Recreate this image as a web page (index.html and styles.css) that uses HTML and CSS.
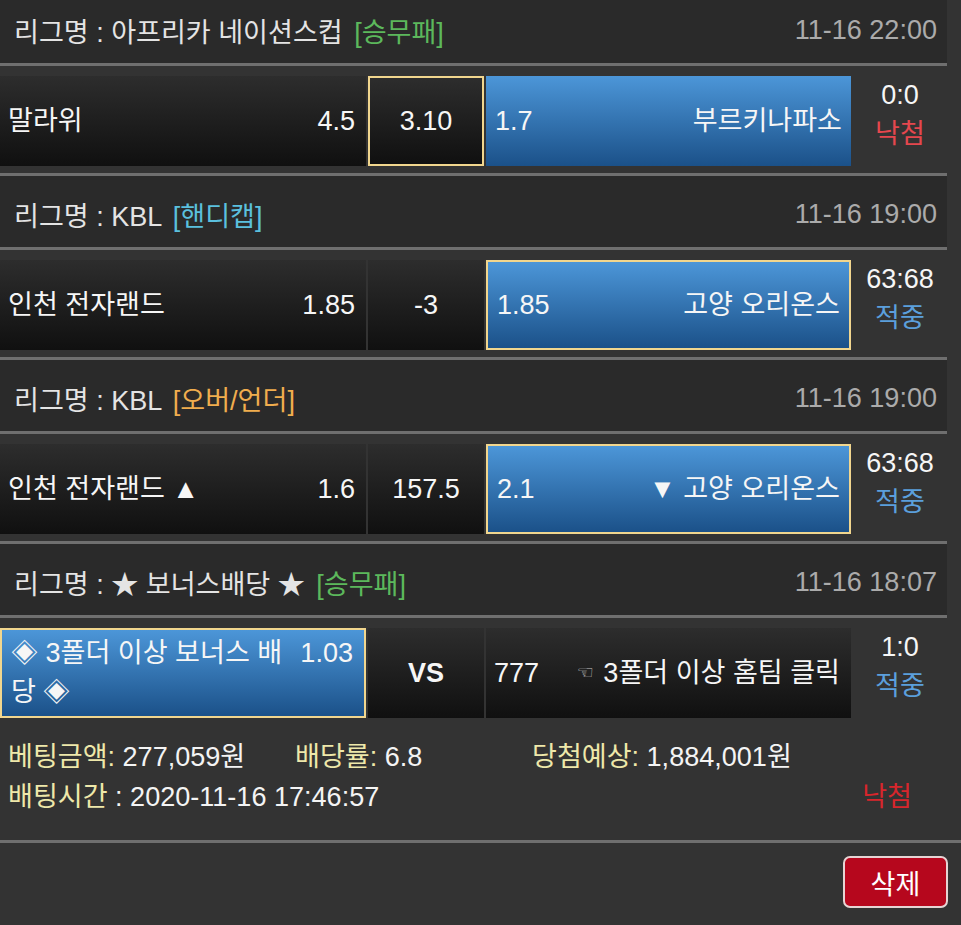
FILE: index.html
```html
<!DOCTYPE html>
<html lang="ko">
<head>
<meta charset="utf-8">
<title>베팅내역</title>
<link rel="stylesheet" href="styles.css">
</head>
<body>
<div class="board">
  <div class="league">
    <div class="league-name">리그명 : 아프리카 네이션스컵 <span class="tag tag-green">[승무패]</span></div>
    <div class="league-time">11-16 22:00</div>
  </div>
  <div class="match">
    <div class="pick"><span class="team">말라위</span><span class="odds">4.5</span></div>
    <div class="pick pick-mid selected">3.10</div>
    <div class="pick blue"><span class="odds">1.7</span><span class="team">부르키나파소</span></div>
    <div class="result"><div>0:0</div><div class="lose">낙첨</div></div>
  </div>

  <div class="league">
    <div class="league-name">리그명 : KBL <span class="tag tag-cyan">[핸디캡]</span></div>
    <div class="league-time">11-16 19:00</div>
  </div>
  <div class="match">
    <div class="pick"><span class="team">인천 전자랜드</span><span class="odds">1.85</span></div>
    <div class="pick pick-mid">-3</div>
    <div class="pick blue selected"><span class="odds">1.85</span><span class="team">고양 오리온스</span></div>
    <div class="result"><div>63:68</div><div class="win">적중</div></div>
  </div>

  <div class="league">
    <div class="league-name">리그명 : KBL <span class="tag tag-orange">[오버/언더]</span></div>
    <div class="league-time">11-16 19:00</div>
  </div>
  <div class="match">
    <div class="pick"><span class="team">인천 전자랜드 ▲</span><span class="odds">1.6</span></div>
    <div class="pick pick-mid">157.5</div>
    <div class="pick blue selected"><span class="odds">2.1</span><span class="team">▼ 고양 오리온스</span></div>
    <div class="result"><div>63:68</div><div class="win">적중</div></div>
  </div>

  <div class="league">
    <div class="league-name">리그명 : ★ 보너스배당 ★ <span class="tag tag-green">[승무패]</span></div>
    <div class="league-time">11-16 18:07</div>
  </div>
  <div class="match match-last">
    <div class="pick blue selected"><div class="pick-wrap"><span class="odds-float">1.03</span>◈ 3폴더 이상 보너스 배당 ◈</div></div>
    <div class="pick pick-mid vs">VS</div>
    <div class="pick"><span class="odds">777</span><span class="team"><span class="hand">☜</span> 3폴더 이상 홈팀 클릭</span></div>
    <div class="result"><div>1:0</div><div class="win">적중</div></div>
  </div>
</div>

<div class="summary">
  <div class="summary-row">
    <span><span class="label">베팅금액:</span> 277,059원</span>
    <span><span class="label">배당률:</span> 6.8</span>
    <span><span class="label">당첨예상:</span> 1,884,001원</span>
  </div>
  <div class="summary-row summary-row-split">
    <span><span class="label">배팅시간</span> : 2020-11-16 17:46:57</span>
    <span class="lose-strong">낙첨</span>
  </div>
</div>

<div class="actions">
  <button class="btn-delete" type="button">삭제</button>
</div>
</body>
</html>
```

FILE: styles.css
```css
html, body {
  margin: 0;
  padding: 0;
  background: #333333;
}

body {
  font-family: "Liberation Sans", "Noto Sans CJK KR", sans-serif;
  font-size: 26px;
  font-size-adjust: 0.55;
  color: #f4f4f4;
  overflow: hidden;
}

.board {
  width: 947px;
  margin-top: -8px;
}

.league {
  box-sizing: content-box;
  background: #2a2a2a;
  border-bottom: 3px solid #6f6f6f;
  display: flex;
  align-items: center;
  justify-content: space-between;
  padding: 6px 10px 0 14px;
  height: 65px;
}

.league-name {
  color: #e4e4e4;
  white-space: nowrap;
}

.tag {
  margin-left: 4px;
}

.tag-green { color: #5cb85c; }
.tag-cyan { color: #5bc0de; }
.tag-orange { color: #f0ad4e; }

.league-time {
  color: #ababab;
}

.match {
  display: grid;
  grid-template-columns: 366px 116px 365px 1fr;
  column-gap: 2px;
  padding: 10px 0 7px;
  border-bottom: 3px solid #6f6f6f;
  line-height: 39px;
}

.match-last {
  border-bottom: none;
}

.pick {
  height: 90px;
  box-sizing: border-box;
  display: flex;
  align-items: center;
  justify-content: space-between;
  padding: 0 11px 0 8px;
  background: linear-gradient(#2d2d2d, #101010);
  color: #f6f6f6;
  white-space: nowrap;
}

.pick.blue {
  background: linear-gradient(#4c96d8, #1b5189);
  padding: 0 9px;
}

.pick.selected {
  border: 2px solid #f1d68e;
}

.pick-mid {
  justify-content: center;
  padding: 0;
}

.vs {
  font-weight: bold;
}

.pick-wrap {
  width: 100%;
  white-space: normal;
}

.odds-float {
  float: right;
  margin-left: 10px;
  padding-right: 2px;
}

.hand {
  font-family: "DejaVu Sans", sans-serif;
  font-size-adjust: none;
  font-size: 19px;
  color: #c4c4c4;
  vertical-align: 3px;
  margin-right: 2px;
}

.result {
  align-self: start;
  text-align: center;
  color: #f6f6f6;
}

.lose { color: #e5474e; }
.win { color: #5b9fdc; }

.summary {
  padding: 12px 0 23px 8px;
  line-height: 40px;
}

.summary-row {
  display: grid;
  grid-template-columns: 287px 237px 1fr;
  white-space: nowrap;
}

.summary-row-split {
  display: flex;
  justify-content: space-between;
  padding-right: 49px;
}

.label {
  color: #eee8aa;
}

.lose-strong {
  color: #d8262c;
}

.actions {
  border-top: 3px solid #6f6f6f;
  display: flex;
  justify-content: flex-end;
  padding: 13px 13px 0;
}

.btn-delete {
  width: 105px;
  height: 52px;
  background: #b6071d;
  border: 2px solid #e6d4d4;
  border-radius: 7px;
  color: #ffffff;
  font-family: "Liberation Sans", "Noto Sans CJK KR", sans-serif;
  font-size: 26px;
  font-size-adjust: 0.55;
  padding: 0;
}
```
